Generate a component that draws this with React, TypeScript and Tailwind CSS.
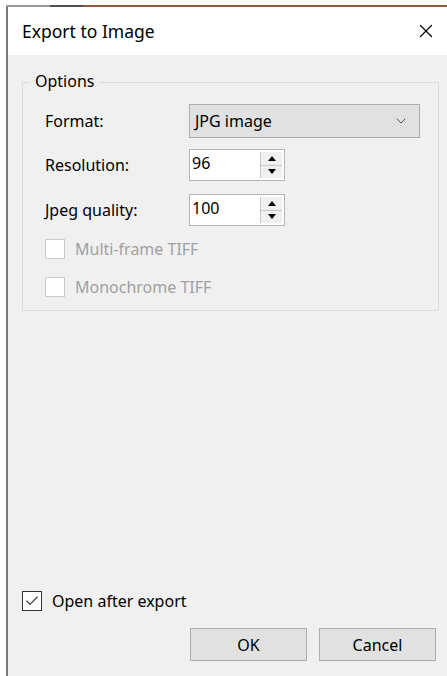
import { Check, ChevronDown, X } from 'lucide-react';

const font = { fontFamily: '"Noto Sans", "Open Sans", sans-serif' };

const Spinner = ({ value }: { value: string }) => (
  <div className="flex w-[96px] h-[32px] border border-[#b4b4b4] bg-white">
    <div className="flex-1 pl-[2px] text-[16px] leading-[26px] text-black">{value}</div>
    <div className="flex flex-col w-[22px] my-[2px] mr-[2px] border-l border-[#c8c8c8]">
      <div className="flex-1 flex items-center justify-center border-b border-[#c8c8c8] bg-[#f0f0f0]">
        <div className="w-0 h-0 border-x-[4px] border-x-transparent border-b-[5px] border-b-black" />
      </div>
      <div className="flex-1 flex items-center justify-center bg-[#f0f0f0]">
        <div className="w-0 h-0 border-x-[4px] border-x-transparent border-t-[5px] border-t-black" />
      </div>
    </div>
  </div>
);

const DisabledCheck = ({ label }: { label: string }) => (
  <div className="flex items-center gap-[10px] h-[24px]">
    <div className="w-[20px] h-[20px] border border-[#cccccc] bg-white" />
    <span className="text-[16px] leading-[24px] text-[#a0a0a0]">{label}</span>
  </div>
);

const Row = ({ label, children }: { label: string; children: React.ReactNode }) => (
  <div className="flex items-center">
    <span className="w-[144px] text-[16px] text-black">{label}</span>
    {children}
  </div>
);

export default function App() {
  return (
    <div className="w-[447px] h-[676px] bg-white overflow-hidden" style={font}>
      <div className="ml-[6px] mt-[5px] h-[671px] flex flex-col">
        {/* window frame, top edge */}
        <div className="flex h-[2px] shrink-0">
          <div className="w-[44px] bg-[#9a9a9a]" />
          <div className="w-[33px] bg-[#505050]" />
          <div className="flex-1 bg-[#8a5a3c]" />
        </div>
        <div className="flex-1 flex flex-col border-l-2 border-[#7a7a7a]">
          <div className="h-[48px] shrink-0 bg-white flex items-center justify-between pl-[14px] pr-[10px]">
            <span className="text-[17.5px] text-black">Export to Image</span>
            <X className="w-[22px] h-[22px] text-black" strokeWidth={1.3} />
          </div>

          <div className="flex-1 bg-[#f0f0f0] flex flex-col">
            {/* Options group */}
            <div className="relative mt-[27px] ml-[14px] mr-[8px] h-[229px] border border-[#dcdcdc]">
              <span className="absolute -top-[14px] left-[7px] px-[5px] bg-[#f0f0f0] text-[16px] text-black">
                Options
              </span>
              <div className="pt-[21px] pl-[22px] flex flex-col">
                <Row label="Format:">
                  <div className="flex items-center justify-between w-[231px] h-[34px] border border-[#adadad] bg-[#e1e1e1] pl-[5px] pr-[10px]">
                    <span className="text-[16px] text-black">JPG image</span>
                    <ChevronDown className="w-[16px] h-[16px] text-[#555]" strokeWidth={1.5} />
                  </div>
                </Row>
                <div className="h-[11px]" />
                <Row label="Resolution:">
                  <Spinner value="96" />
                </Row>
                <div className="h-[13px]" />
                <Row label="Jpeg quality:">
                  <Spinner value="100" />
                </Row>
                <div className="h-[11px]" />
                <DisabledCheck label="Multi-frame TIFF" />
                <div className="h-[14px]" />
                <DisabledCheck label="Monochrome TIFF" />
              </div>
            </div>

            <div className="flex-1" />

            <div className="flex items-center gap-[10px] ml-[14px]">
              <div className="w-[20px] h-[20px] border border-[#333333] bg-white flex items-center justify-center">
                <Check className="w-[16px] h-[16px] text-[#333]" strokeWidth={1.6} />
              </div>
              <span className="text-[16px] text-black">Open after export</span>
            </div>

            <div className="flex justify-end gap-[12px] mt-[15px] mb-[15px] mr-[11px]">
              <button className="w-[117px] h-[33px] border border-[#adadad] bg-[#e1e1e1] text-[16px] text-black">
                OK
              </button>
              <button className="w-[117px] h-[33px] border border-[#adadad] bg-[#e1e1e1] text-[16px] text-black">
                Cancel
              </button>
            </div>
          </div>
        </div>
      </div>
    </div>
  );
}
